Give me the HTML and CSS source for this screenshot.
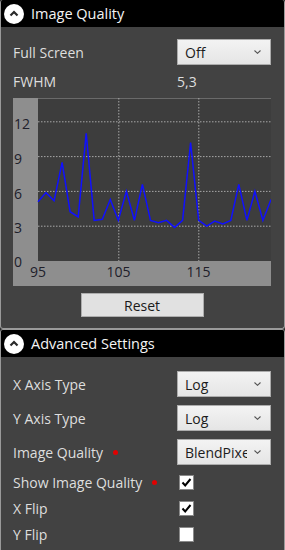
FILE: index.html
```html
<!DOCTYPE html>
<html lang="en">
<head>
  <meta charset="UTF-8" />
  <title>Image Quality</title>
  <link rel="stylesheet" href="styles.css">
</head>
<body>
  <!-- Image Quality panel -->
  <div class="panel panel-top">
    <div class="panel-head">
      <span class="toggle">
        <svg width="10" height="7" viewBox="0 0 10 7"><path d="M1.5 5.5 L5 2 L8.5 5.5" fill="none" stroke="#2a2a2a" stroke-width="2.2"/></svg>
      </span>
      <span>Image Quality</span>
    </div>
    <div class="panel-body first-body">
      <div class="row">
        <span class="label">Full Screen</span>
        <div class="select">
          <span class="value">Off</span>
          <svg class="chev" width="7" height="4" viewBox="0 0 7 4"><path d="M0.5 0.5 L3.5 3.3 L6.5 0.5" fill="none" stroke="#555" stroke-width="1.1"/></svg>
        </div>
      </div>
      <div class="row info">
        <span class="label">FWHM</span>
        <span class="reading">5,3</span>
      </div>

      <!-- Chart -->
      <svg class="chart" width="258" height="188" viewBox="0 0 258 188">
        <rect x="0" y="0" width="258" height="188" fill="#8e8e8e"/>
        <rect x="25" y="0" width="233" height="163" fill="#3d3d3d"/>
        <line x1="25" y1="0.5" x2="258" y2="0.5" stroke="#6a6a6a"/>
        <g class="grid">
          <line x1="25" y1="23.8" x2="258" y2="23.8"/>
          <line x1="25" y1="58.6" x2="258" y2="58.6"/>
          <line x1="25" y1="93.4" x2="258" y2="93.4"/>
          <line x1="25" y1="128.2" x2="258" y2="128.2"/>
          <line x1="105.8" y1="0" x2="105.8" y2="163"/>
          <line x1="185.8" y1="0" x2="185.8" y2="163"/>
        </g>
        <polyline class="series" points="25,103.8 33,94.6 41.1,102.7 49.1,64.4 57.1,113.7 65.2,118.9 73.2,35.4 81.2,122.4 89.3,121.2 97.3,101.5 105.3,122.4 113.4,93.4 121.4,122.4 129.4,86.4 137.5,122.4 145.5,124.7 153.5,122.4 161.6,129.4 169.6,122.4 177.6,44.7 185.7,122.4 193.7,128.2 201.7,123 209.8,125.9 217.8,122.4 225.8,86.4 233.9,122.4 241.9,93.4 249.9,122.4 258,101.5"/>
        <g class="ticks">
          <text x="1" y="31">12</text>
          <text x="1" y="66">9</text>
          <text x="1" y="101">6</text>
          <text x="1" y="135">3</text>
          <text x="1" y="169">0</text>
          <text x="25" y="179" text-anchor="middle">95</text>
          <text x="105.5" y="179" text-anchor="middle">105</text>
          <text x="185.5" y="179" text-anchor="middle">115</text>
        </g>
      </svg>

      <div class="actions">
        <div class="button">Reset</div>
      </div>
    </div>
  </div>

  <!-- Advanced Settings panel -->
  <div class="panel panel-bottom">
    <div class="panel-head">
      <span class="toggle">
        <svg width="10" height="7" viewBox="0 0 10 7"><path d="M1.5 5.5 L5 2 L8.5 5.5" fill="none" stroke="#2a2a2a" stroke-width="2.2"/></svg>
      </span>
      <span>Advanced Settings</span>
    </div>
    <div class="panel-body second-body">
      <div class="row">
        <span class="label">X Axis Type</span>
        <div class="select">
          <span class="value">Log</span>
          <svg class="chev" width="7" height="4" viewBox="0 0 7 4"><path d="M0.5 0.5 L3.5 3.3 L6.5 0.5" fill="none" stroke="#555" stroke-width="1.1"/></svg>
        </div>
      </div>
      <div class="row">
        <span class="label">Y Axis Type</span>
        <div class="select">
          <span class="value">Log</span>
          <svg class="chev" width="7" height="4" viewBox="0 0 7 4"><path d="M0.5 0.5 L3.5 3.3 L6.5 0.5" fill="none" stroke="#555" stroke-width="1.1"/></svg>
        </div>
      </div>
      <div class="row">
        <span class="label">Image Quality <i class="dot"></i></span>
        <div class="select">
          <span class="value">BlendPixel</span>
          <svg class="chev" width="7" height="4" viewBox="0 0 7 4"><path d="M0.5 0.5 L3.5 3.3 L6.5 0.5" fill="none" stroke="#555" stroke-width="1.1"/></svg>
        </div>
      </div>
      <div class="checks">
        <div class="row check-row">
          <span class="label">Show Image Quality <i class="dot"></i></span>
          <span class="checkbox"><svg width="13" height="13" viewBox="0 0 13 13"><path d="M2.5 6.5 L5.2 9.5 L10.5 3" fill="none" stroke="#000" stroke-width="2"/></svg></span>
        </div>
        <div class="row check-row">
          <span class="label">X Flip</span>
          <span class="checkbox"><svg width="13" height="13" viewBox="0 0 13 13"><path d="M2.5 6.5 L5.2 9.5 L10.5 3" fill="none" stroke="#000" stroke-width="2"/></svg></span>
        </div>
        <div class="row check-row">
          <span class="label">Y Flip</span>
          <span class="checkbox"></span>
        </div>
      </div>
    </div>
  </div>
</body>
</html>
```

FILE: styles.css
```css
body {
  margin: 0;
  background: #2b2b2b;
  font-family: "Open Sans", "Noto Sans", sans-serif;
  font-size: 14px;
  color: #dedede;
}

.panel {
  background: #424242;
  border: 1px solid #9a9a9a;
  border-radius: 3px;
  overflow: hidden;
}

.panel-top {
  height: 328px;
  border-top: none;
}

.panel-bottom {
  height: 240px;
}

.panel-head {
  height: 27px;
  background: #000;
  display: flex;
  align-items: center;
  gap: 7px;
  padding-left: 3px;
  color: #f4f4f4;
  font-size: 14.5px;
}

.toggle {
  width: 20px;
  height: 20px;
  border-radius: 50%;
  background: #fff;
  display: flex;
  align-items: center;
  justify-content: center;
}

.panel-body {
  padding: 0 13px 0 12px;
}

.first-body {
  padding-top: 12px;
}

.second-body {
  padding-top: 14px;
}

.row {
  display: flex;
  align-items: center;
  height: 26px;
}

.second-body .row + .row {
  margin-top: 8px;
}

.label {
  width: 164px;
  display: flex;
  align-items: center;
}

.info {
  height: 20px;
  margin-top: 6px;
}

.reading {
  color: #dedede;
}

.select {
  width: 94px;
  height: 26px;
  box-sizing: border-box;
  border: 1px solid #acacac;
  background: linear-gradient(#f3f3f3, #e5e5e5);
  color: #1c1c1c;
  display: flex;
  align-items: center;
  padding-left: 7px;
}

.value {
  width: 62px;
  overflow: hidden;
  white-space: nowrap;
}

.chev {
  margin-left: auto;
  margin-right: 9px;
}

.chart {
  display: block;
  margin-top: 7px;
}

.grid line {
  stroke: #a8a8a8;
  stroke-width: 1;
  stroke-dasharray: 1.5 1.5;
}

.series {
  fill: none;
  stroke: #1010ff;
  stroke-width: 1.5;
  stroke-linejoin: miter;
}

.ticks text {
  font-family: "Open Sans", "Noto Sans", sans-serif;
  font-size: 14px;
  fill: #20202a;
}

.actions {
  display: flex;
  justify-content: center;
  margin-top: 7px;
}

.button {
  width: 123px;
  height: 24px;
  box-sizing: border-box;
  border: 1px solid #adadad;
  background: #e1e1e1;
  color: #1a1a1a;
  display: flex;
  align-items: center;
  justify-content: center;
}

.dot {
  width: 5px;
  height: 5px;
  border-radius: 50%;
  background: #e00000;
  margin-left: 10px;
}

.checks {
  margin-top: 4px;
}

.second-body .checks .row {
  margin-top: 0;
}

.checkbox {
  width: 15px;
  height: 15px;
  box-sizing: border-box;
  border: 1px solid #8a8a8a;
  background: #fff;
  margin-left: 2px;
  display: flex;
  align-items: center;
  justify-content: center;
}
```
